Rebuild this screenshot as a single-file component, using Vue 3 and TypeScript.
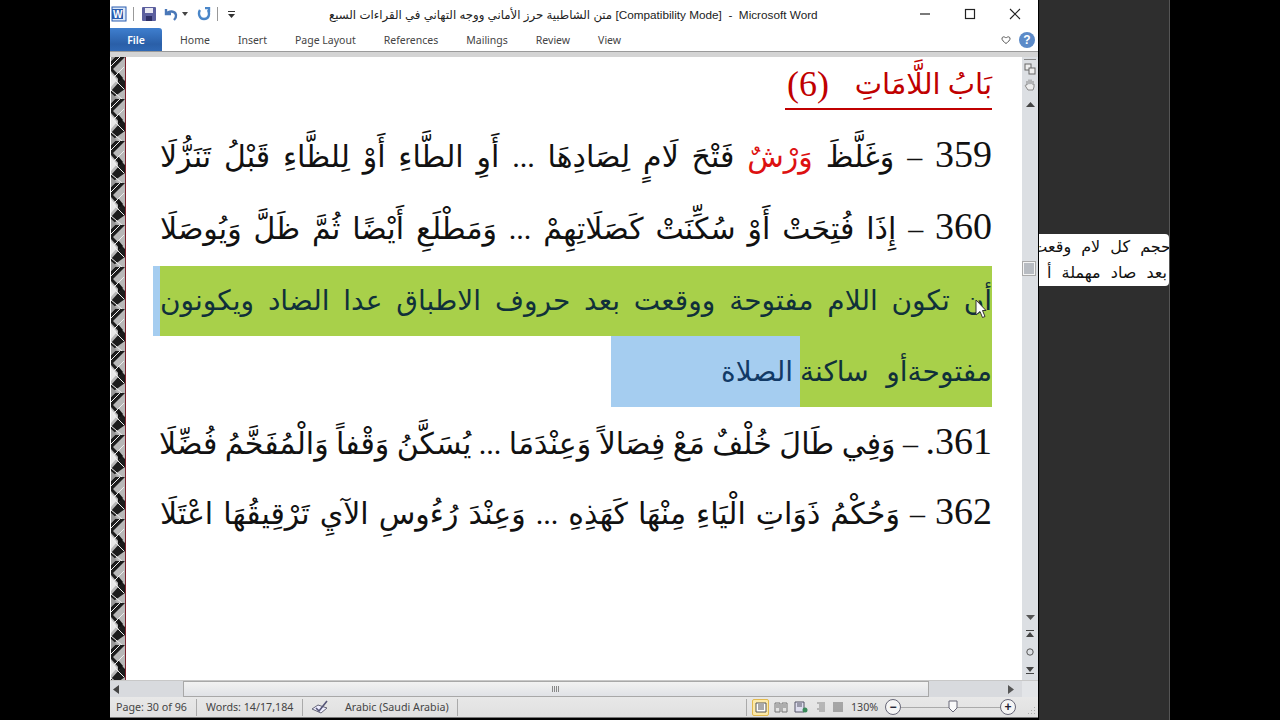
<script setup lang="ts">
const tabs: string[] = ['Home', 'Insert', 'Page Layout', 'References', 'Mailings', 'Review', 'View']
</script>

<template>
  <div class="screen">
    <section class="win">
      <header class="titlebar">
        <div class="qat">
          <svg class="ico" width="16" height="16" viewBox="0 0 16 16"><rect x="1" y="1" width="14" height="14" fill="#dbe8f8" stroke="#2a5db0"/><rect x="1" y="3" width="11" height="10" fill="#2a5db0"/><text x="2" y="12" font-size="10" font-weight="700" fill="#fff" font-family="Liberation Sans">W</text></svg>
          <i class="qsep"></i>
          <svg class="ico" width="16" height="16" viewBox="0 0 16 16"><rect x="1" y="1" width="14" height="14" rx="1" fill="#5b5f9e"/><rect x="4" y="2" width="8" height="5" fill="#e8e8f2"/><rect x="5" y="10" width="6" height="5" fill="#2d2f66"/></svg>
          <svg class="ico undo" width="16" height="14" viewBox="0 0 16 14"><path d="M3 2v5h5M3.500 7C6 3.500 12 3.500 13 8c.3 2-.5 3.500-2 5" fill="none" stroke="#4a78b8" stroke-width="2.400"/></svg>
          <svg class="caret" width="6" height="4" viewBox="0 0 6 4"><path d="M0 0h6L3 4z" fill="#444"/></svg>
          <svg class="ico redo" width="14" height="14" viewBox="0 0 14 14"><path d="M3 3C1 6 2 12 7 12s6-5 4-9M8 1h4v4" fill="none" stroke="#4a86c8" stroke-width="2.400"/></svg>
          <i class="qsep"></i>
          <svg class="caret" width="7" height="7" viewBox="0 0 7 7"><path d="M0 0h7v1H0zM0 3h7L3.500 7z" fill="#333"/></svg>
        </div>
        <div class="title">متن الشاطبية حرز الأماني ووجه التهاني في القراءات السبع [Compatibility Mode]&nbsp; - &nbsp;Microsoft Word</div>
        <div class="winbtns">
          <svg width="12" height="12" viewBox="0 0 12 12"><path d="M1 6h10" stroke="#222" stroke-width="1.200"/></svg>
          <svg width="12" height="12" viewBox="0 0 12 12"><rect x="1.500" y="1.500" width="9" height="9" fill="none" stroke="#222" stroke-width="1.200"/></svg>
          <svg width="12" height="12" viewBox="0 0 12 12"><path d="M1 1l10 10M11 1L1 11" stroke="#222" stroke-width="1.100"/></svg>
        </div>
      </header>

      <nav class="ribbon">
        <div class="file">File</div>
        <ul class="tabs">
          <li v-for="t in tabs" :key="t">{{ t }}</li>
        </ul>
        <div class="ribbon-end">
          <svg width="10" height="8" viewBox="0 0 10 8"><path d="M1 2c1-2 3-1 4 0 1-1 3-2 4 0 .5 2-2 4-4 5.500C3 6 .5 4 1 2z" fill="#fff" stroke="#555"/></svg>
          <span class="help">?</span>
        </div>
      </nav>
      <div class="strip"></div>

      <div class="doc">
        <div class="margin">
          <svg width="14" height="100%">
            <defs>
              <pattern id="band" width="14" height="42" patternUnits="userSpaceOnUse">
                <rect width="14" height="42" fill="#b8b8b8"/>
                <path d="M14 0L2 12l12 12v8L0 42V34L9 24 0 14V4L4 0z" fill="#1c1c1c"/>
                <path d="M0 16L6 23 0 30z" fill="#e8e8e8"/>
                <path d="M7 15l5 6-5 5z" fill="#111"/>
                <path d="M0 33l11 9M0 9L9 0M13 10L2 21l11 11" fill="none" stroke="#eee" stroke-width="1"/>
                <path d="M0 36l7 6H0zM0 0h4L0 4z" fill="#999"/>
              </pattern>
            </defs>
            <rect width="14" height="100%" fill="url(#band)"/>
          </svg>
        </div>

        <main class="page">
          <h1 class="heading"><span><b class="hnum">(6)</b>بَابُ اللَّامَاتِ </span></h1>

          <p class="verse"><b class="num">359</b> – وَغَلَّظَ <span class="red">وَرْشٌ</span> فَتْحَ لَامٍ لِصَادِهَا ... أَوِ الطَّاءِ أَوْ لِلظَّاءِ قَبْلُ تَنَزُّلَا</p>
          <p class="verse last">
            <b class="num">360</b> – إِذَا فُتِحَتْ أَوْ سُكِّنَتْ كَصَلَاتِهِمْ ... وَمَطْلَعِ أَيْضًا ثُمَّ ظَلَّ وَيُوصَلَا
          </p>

          <div class="hl-one">
            <div class="hl-text">أن تكون اللام مفتوحة ووقعت بعد حروف الاطباق عدا الضاد ويكونون</div>
            <svg class="pointer" width="12" height="20" viewBox="0 0 12 20"><path d="M1 1v15l4-3.500 2.500 6 2.500-1-2.500-6H11z" fill="#fff" stroke="#333"/></svg>
          </div>
          <div class="hl-two">
            <span class="green">مفتوحةأو ساكنة</span><span class="blue">الصلاة</span>
          </div>

          <p class="verse v361"><b class="num">361.</b> – وَفِي طَالَ خُلْفٌ مَعْ فِصَالاً وَعِنْدَمَا ... يُسَكَّنُ وَقْفاً وَالْمُفَخَّمُ فُضِّلَا</p>
          <p class="verse"><b class="num">362</b> – وَحُكْمُ ذَوَاتِ الْيَاءِ مِنْهَا كَهَذِهِ ... وَعِنْدَ رُءُوسِ الآيِ تَرْقِيقُهَا اعْتَلَا</p>
        </main>

        <aside class="vscroll">
          <i class="dash"></i>
          <svg width="12" height="12" viewBox="0 0 12 12"><rect x="1" y="1" width="6" height="6" fill="#eee" stroke="#666"/><rect x="5" y="5" width="6" height="6" fill="#eee" stroke="#666"/></svg>
          <svg width="12" height="13" viewBox="0 0 12 13"><path d="M3 7V3m2 3V1.500m2 4.500V1.500M9 7V3M3 7c-2-1-2 1-1 2l2 3h5l1-3V6" fill="#eee" stroke="#888"/></svg>
          <svg class="up" width="9" height="5" viewBox="0 0 9 5"><path d="M4.500 0L9 5H0z" fill="#444"/></svg>
          <div class="vtrack"><div class="vthumb"></div></div>
          <svg class="lower" width="9" height="5" viewBox="0 0 9 5"><path d="M4.500 5L9 0H0z" fill="#555"/></svg>
          <svg class="lower" width="8" height="8" viewBox="0 0 8 8"><path d="M0 0h8v1H0zM4 2l4 5H0z" fill="#444"/></svg>
          <svg class="lower" width="8" height="8" viewBox="0 0 8 8"><circle cx="4" cy="4" r="3.200" fill="none" stroke="#555"/></svg>
          <svg class="lower" width="8" height="8" viewBox="0 0 8 8"><path d="M0 7h8v1H0zM4 6L8 1H0z" fill="#444"/></svg>
        </aside>
      </div>

      <div class="hscroll">
        <div class="hleft"><svg width="6" height="9" viewBox="0 0 6 9"><path d="M0 4.500L6 0v9z" fill="#444"/></svg></div>
        <div class="hthumb"><i></i></div>
        <div class="hright"><svg width="6" height="9" viewBox="0 0 6 9"><path d="M6 4.500L0 0v9z" fill="#555"/></svg></div>
        <div class="hcorner"></div>
      </div>

      <footer class="status">
        <span class="cell c1">Page: 30 of 96</span>
        <span class="cell c2">Words: 14/17,184</span>
        <span class="cell c3">
          <svg width="18" height="14" viewBox="0 0 18 14"><path d="M1 9l6-4 9 3-6 5z" fill="#eef" stroke="#667"/><path d="M5 8l3 3 8-10" fill="none" stroke="#557" stroke-width="1.600"/></svg>
          <b>Arabic (Saudi Arabia)</b>
        </span>
        <span class="grow"></span>
        <div class="views">
          <span class="active"><svg width="12" height="11" viewBox="0 0 12 11"><path d="M1 1h10v9H1zM3 3h6M3 5h6M3 7h6" fill="#fff" stroke="#555"/></svg></span>
          <svg width="14" height="11" viewBox="0 0 14 11"><path d="M1 1h5v9H1zM8 1h5v9H8zM2 3h3M2 5h3M9 3h3M9 5h3" fill="none" stroke="#777"/></svg>
          <svg width="14" height="12" viewBox="0 0 14 12"><path d="M1 1h9v10H1zM3 3h5M3 5h5" fill="#dde" stroke="#556"/><circle cx="11" cy="9" r="2.500" fill="#3a8a5a"/></svg>
          <svg width="12" height="11" viewBox="0 0 12 11"><path d="M3 1h8M5 3h6M5 5h6M3 7h8M5 9h6" stroke="#888"/></svg>
          <svg width="12" height="11" viewBox="0 0 12 11"><path d="M1 1h10M1 3h10M1 5h10M1 7h10M1 9h10" stroke="#666"/></svg>
        </div>
        <span class="zoomval">130%</span>
        <span class="round">−</span>
        <div class="slider"><svg class="knob" width="10" height="13" viewBox="0 0 10 13"><path d="M1 1h8v7l-4 4-4-4z" fill="#fafafa" stroke="#667"/></svg></div>
        <span class="round">+</span>
        <svg class="grip" width="9" height="9" viewBox="0 0 9 9"><path d="M7 1h1v1H7zM4 4h1v1H4zM7 4h1v1H7zM1 7h1v1H1zM4 7h1v1H4zM7 7h1v1H7z" fill="#aaa"/></svg>
      </footer>
    </section>

    <div class="dark">
      <div class="popover">
        <div class="pop-line pl1">حجم كل لام وقعت</div>
        <div class="pop-line pl2">بعد صاد مهملة أ</div>
      </div>
    </div>
    <div class="black"></div>
  </div>
</template>

<style>
html, body { margin: 0; background: #000; overflow: hidden; }
</style>

<style scoped>
.screen { width: 1280px; height: 720px; display: flex; background: #000; font-family: "Noto Sans", "DejaVu Sans", sans-serif; overflow: hidden; padding-left: 110px; box-sizing: border-box; }
.win { width: 928px; height: 718px; background: #fff; display: flex; flex-direction: column; flex: none; }
.dark { width: 131px; flex: none; margin-left: 1px; background: #2e2e2e; padding-top: 234px; box-sizing: border-box; height: 720px; border-right: 1px solid #555; }
.black { flex: 1; background: #000; }

.titlebar { height: 28px; display: flex; align-items: center; background: #fff; flex: none; }
.qat { display: flex; align-items: center; width: 219px; padding-left: 1px; box-sizing: border-box; flex: none; }
.ico { flex: none; }
.qsep { width: 1px; height: 14px; background: #999; margin: 0 7px 0 6px; }
.undo { margin-left: 6px; }
.caret { margin-left: 3px; }
.redo { margin-left: 9px; }
.title { width: 500px; flex: none; font: 11.750px "Liberation Sans", "DejaVu Sans", sans-serif; color: #222; white-space: nowrap; padding-top: 1px; }
.winbtns { margin-left: auto; display: flex; align-items: center; gap: 33px; padding-right: 17px; }

.ribbon { height: 24px; display: flex; align-items: stretch; flex: none; background: #fff; border-bottom: 1px solid #9a9a9a; box-sizing: border-box; }
.file { width: 52px; background: linear-gradient(#3f7fcf, #2a5fa8 70%, #2f68b4); color: #fff; font-size: 10.500px; font-weight: 600; display: flex; align-items: center; justify-content: center; border-radius: 0 3px 0 0; }
.tabs { list-style: none; margin: 0; padding: 0 0 0 18px; display: flex; gap: 28px; align-items: center; font-size: 10.500px; color: #444; }
.tabs li { white-space: nowrap; }
.ribbon-end { margin-left: auto; display: flex; align-items: center; gap: 8px; padding-right: 3px; }
.help { width: 16px; height: 16px; border-radius: 50%; background: #5b8ac8; color: #fff; font: 700 12px "Liberation Sans", sans-serif; display: flex; align-items: center; justify-content: center; }
.strip { height: 5px; background: #d4d4d4; flex: none; }

.doc { flex: 1; display: flex; min-height: 0; }
.margin { width: 16px; flex: none; padding-left: 1px; box-sizing: border-box; border-right: 1px solid #7a1f2a; line-height: 0; overflow: hidden; }
.page { flex: 1; min-width: 0; padding: 0 30px 0 27px; direction: rtl; color: #111; font-family: "Liberation Serif", "DejaVu Sans", serif; overflow: hidden; }

.heading { margin: 0; height: 61px; box-sizing: border-box; padding-top: 5px; font-weight: 400; font-size: 29px; line-height: 44px; color: #c00000; text-align: right; }
.heading span { display: flex; flex-direction: row-reverse; justify-content: space-between; width: 207px; border-bottom: 2px solid #c00000; white-space: nowrap; padding-bottom: 2px; margin-left: auto; }
.hnum { font-size: 36px; font-weight: 400; padding-left: 2px; }

.verse { margin: 0 0 0 7px; height: 72px; line-height: 72px; white-space: nowrap; text-align: justify; text-align-last: justify; font-size: 30px; overflow: hidden; }
.num { font-weight: 400; font-size: 38px; }
.last { margin-bottom: 4px; }
.red { color: #d11; }
.hl-one { height: 70px; background: #a8d04a; border-left: 7px solid #a5cdf0; position: relative; }
.hl-text { font-size: 28px; line-height: 70px; color: #10303a; white-space: nowrap; text-align: justify; text-align-last: justify; overflow: hidden; }
.pointer { position: absolute; right: 5px; top: 33px; }
.hl-two { height: 71px; display: flex; font-size: 28px; line-height: 71px; color: #10303a; }
.green { width: 192px; background: #a8d04a; white-space: nowrap; text-align: justify; text-align-last: justify; overflow: hidden; }
.blue { width: 189px; background: #a5cdf0; color: #123a66; box-sizing: border-box; padding-right: 7px; white-space: nowrap; }
.v361 { height: 68px; line-height: 68px; }

.vscroll { width: 16px; flex: none; background: #dcdfe3; display: flex; flex-direction: column; align-items: center; gap: 3px; padding: 2px 0 6px; box-sizing: border-box; }
.dash { width: 12px; height: 1px; background: #888; }
.up { margin-top: 8px; }
.vtrack { flex: 1; width: 100%; position: relative; }
.vthumb { position: absolute; top: 151px; left: 0; width: 14px; height: 15px; background: #b8bcc2; border: 2px solid #f4f4f4; box-sizing: border-box; outline: 1px solid #aaa; outline-offset: -1px; }
.lower { margin-top: 7px; }

.hscroll { height: 17px; flex: none; display: flex; align-items: stretch; background: #d8dade; border-top: 1px solid #c8c8c8; box-sizing: border-box; }
.hleft { width: 73px; display: flex; align-items: center; padding-left: 3px; box-sizing: border-box; }
.hthumb { width: 746px; background: linear-gradient(#f2f2f2, #e0e2e6); border: 1px solid #a8a8a8; box-sizing: border-box; position: relative; }
.hthumb i { position: absolute; left: 368px; top: 4px; width: 7px; height: 6px; background: repeating-linear-gradient(90deg, #888 0 1px, transparent 1px 2px); }
.hright { width: 93px; display: flex; align-items: center; justify-content: flex-end; padding-right: 8px; box-sizing: border-box; }
.hcorner { width: 16px; background: #e3e5e8; }

.status { height: 20px; flex: none; display: flex; align-items: center; background: linear-gradient(#e8e8e8, #e0e0e0); font-size: 10.700px; color: #444; border-bottom: 1px solid #777; }
.cell { height: 17px; display: flex; align-items: center; border-right: 1px solid #aaa; box-sizing: border-box; white-space: nowrap; }
.c1 { width: 87px; padding-left: 6px; }
.c2 { width: 106px; padding-left: 9px; }
.c3 { width: 155px; padding-left: 8px; }
.c3 b { font-weight: 400; margin-left: 16px; }
.grow { flex: 1; }
.views { display: flex; align-items: center; gap: 6px; border-left: 1px solid #aaa; height: 17px; padding-left: 5px; width: 105px; box-sizing: border-box; }
.active { width: 17px; height: 17px; background: #fce9a8; border: 1px solid #e2b94e; box-sizing: border-box; display: flex; align-items: center; justify-content: center; margin-right: -1px; border-radius: 2px; }
.zoomval { width: 34px; flex: none; }
.round { width: 14px; height: 14px; border: 1px solid #667; border-radius: 50%; display: flex; align-items: center; justify-content: center; color: #223; font: 700 12px "Liberation Sans", sans-serif; background: #f5f5f5; flex: none; }
.slider { width: 99px; height: 1px; background: #aaa; position: relative; flex: none; }
.knob { position: absolute; left: 47px; top: -7px; }
.grip { margin: 6px 2px 0 11px; flex: none; }

.popover { width: 130px; height: 52px; background: #fff; border-radius: 0 4px 4px 0; overflow: hidden; color: #111; font: 16px "DejaVu Sans", sans-serif; direction: rtl; word-spacing: 5px; }
.pop-line { height: 26px; line-height: 26px; white-space: nowrap; }
.pl1 { margin-right: -2px; }
.pl2 { margin-right: 2px; }
</style>
